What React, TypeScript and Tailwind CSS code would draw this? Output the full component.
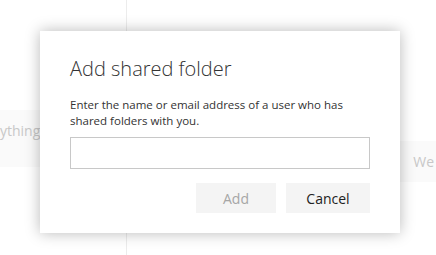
import React from "react";

const font = { fontFamily: '"Open Sans", "Noto Sans", sans-serif' };

const App: React.FC = () => {
  return (
    <div className="relative h-[255px] w-[436px] overflow-hidden bg-white" style={font}>
      {/* page behind the dialog */}
      <div className="flex h-full">
        <div className="h-full w-[127px] shrink-0 border-r border-[#ececec]">
          <div className="mt-[110px] h-[57px] bg-[#fafafa] pt-[11px]">
            <span className="block text-[14px] leading-[20px] text-[#c8c8c8]">ything</span>
          </div>
        </div>
        <div className="flex-1">
          <div className="mt-[141px] flex h-[41px] items-center justify-end bg-[#fafafa] pr-[2px]">
            <span className="text-[14px] text-[#c8c8c8]">We</span>
          </div>
        </div>
      </div>

      {/* dialog */}
      <div className="absolute left-[40px] top-[31px] h-[202px] w-[360px] bg-white px-[30px] pt-[24px] shadow-[0_0_14px_rgba(0,0,0,0.28)]">
        <h1 className="text-[20px] font-light leading-[28px] text-[#333]">Add shared folder</h1>
        <p className="mt-[14px] max-w-[285px] text-[11.5px] leading-[16px] text-[#333]">
          Enter the name or email address of a user who has shared folders with you.
        </p>
        <input
          className="mt-[8px] block h-[32px] w-full border border-[#c8c8c8] px-2 text-[13px] outline-none"
          type="text"
        />
        <div className="mt-[14px] flex justify-end gap-[10px]">
          <button className="h-[30px] w-[80px] bg-[#f4f4f4] text-[14px] font-medium text-[#a6a6a6]">
            Add
          </button>
          <button className="h-[30px] w-[84px] bg-[#f4f4f4] text-[14px] font-medium text-[#222]">
            Cancel
          </button>
        </div>
      </div>
    </div>
  );
};

export default App;
